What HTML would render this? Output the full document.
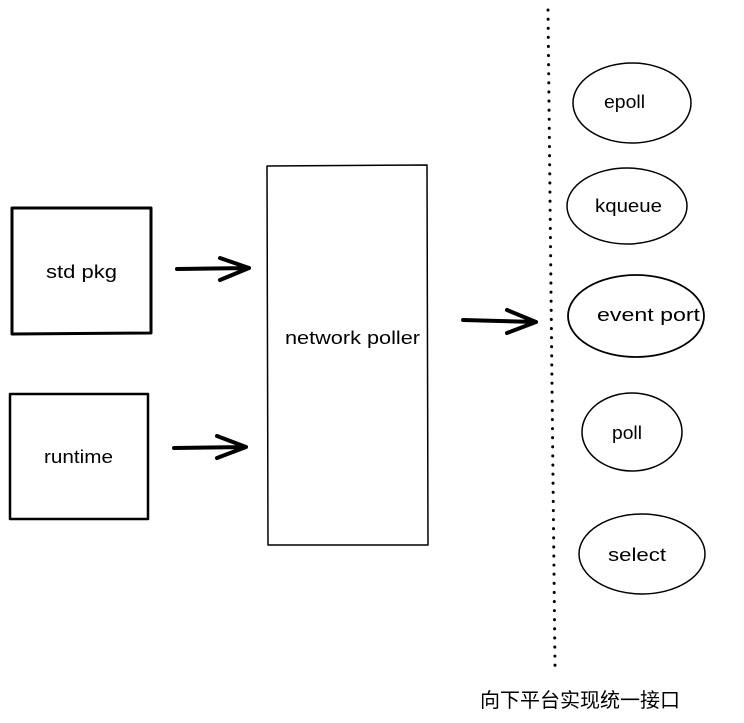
<!DOCTYPE html>
<html><head><meta charset="utf-8"><style>
html,body{margin:0;padding:0;background:#fff;}
svg{display:block}
text{font-family:"Liberation Sans","Noto Sans CJK SC",sans-serif;fill:#000}
</style></head><body>
<svg width="744" height="723" viewBox="0 0 744 723" xmlns="http://www.w3.org/2000/svg">
<g fill="none" stroke="#000" stroke-linecap="round" stroke-linejoin="round">
  <path d="M12 208 L151 208 L151 333 L12 334 Z" stroke-width="3"/>
  <path d="M10 394 L148 394 L148 519 L10 519 Z" stroke-width="2.5"/>
  <path d="M267 166 L427 165 L428 545 L268 545 Z" stroke-width="1.5"/>
  <path d="M177 269 L249 268 M220 258 L249 268 L220 280" stroke-width="4"/>
  <path d="M174 448 L246 447 M217 436 L246 447 L217 458" stroke-width="4"/>
  <path d="M463 320 L536 322 M507 310 L536 322 L507 333" stroke-width="4"/>
  <path d="M548 10 L555 666" stroke-width="3" stroke-dasharray="0.1 9"/>
  <ellipse cx="632" cy="103" rx="59" ry="40" stroke-width="1.5"/>
  <ellipse cx="627" cy="206" rx="60" ry="38" stroke-width="1.5"/>
  <ellipse cx="636" cy="316" rx="68" ry="41" stroke-width="1.8"/>
  <ellipse cx="632" cy="432" rx="50" ry="39" stroke-width="1.5"/>
  <ellipse cx="642" cy="554" rx="63" ry="40" stroke-width="1.5"/>
</g>
<g font-size="18" lengthAdjust="spacingAndGlyphs">
  <text x="46" y="278" textLength="71" lengthAdjust="spacingAndGlyphs">std pkg</text>
  <text x="44" y="463" textLength="69" lengthAdjust="spacingAndGlyphs">runtime</text>
  <text x="285" y="344" textLength="135" lengthAdjust="spacingAndGlyphs">network poller</text>
  <text x="604" y="108" textLength="41" lengthAdjust="spacingAndGlyphs">epoll</text>
  <text x="595" y="212" textLength="67" lengthAdjust="spacingAndGlyphs">kqueue</text>
  <text x="597" y="321" textLength="103" lengthAdjust="spacingAndGlyphs">event port</text>
  <text x="612" y="439" textLength="30" lengthAdjust="spacingAndGlyphs">poll</text>
  <text x="608" y="561" textLength="58" lengthAdjust="spacingAndGlyphs">select</text>
</g>
<text x="480" y="707" font-size="20">向下平台实现统一接口</text>
</svg>
</body></html>
